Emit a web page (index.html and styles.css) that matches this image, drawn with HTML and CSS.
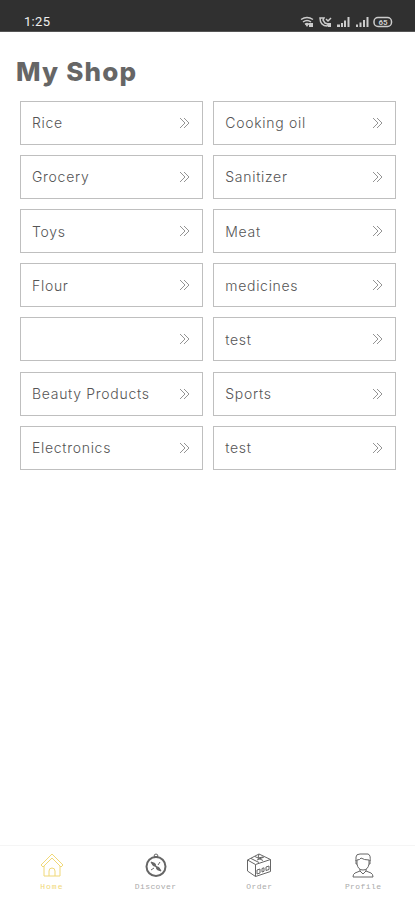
FILE: index.html
```html
<!DOCTYPE html>
<html lang="en">
<head>
<meta charset="utf-8">
<meta name="viewport" content="width=device-width, initial-scale=1">
<title>My Shop</title>
<link rel="stylesheet" href="styles.css">
</head>
<body>
<svg width="0" height="0" class="defs" aria-hidden="true">
  <symbol id="chevrons" viewBox="0 0 11 12"><path d="M1 1l5 5-5 5M5 1l5 5-5 5"/></symbol>
</svg>
<header class="status">
  <span class="time">1:25</span>
  <svg class="indicators" width="94" height="14" viewBox="0 0 94 14">
    <g fill="none" stroke="#ccc" stroke-width="1.5">
      <path d="M1 4.500q6-4 12 0M3 7q4-3 8 0M5 9.300q2-1.500 4 0"/>
      <path d="M20 3c0 5 3 8 7 8l1-2-3-1-2-3 1-2zM26 4l2 2 3-3"/>
      <rect x="74" y="2.500" width="17.500" height="9" rx="4"/>
    </g>
    <g fill="#ccc">
      <path d="M5 9l2 3 2-3zM9 8h4v4H9zM28 8h3v4h-3z"/>
      <path d="M37 9.500h3v2.500h-3zM41 8h2v4h-2zM44 5.500h2V12h-2zM47.500 2h2v10h-2z"/>
      <path d="M56 9.500h2V12h-2zM59.500 7.500h2V12h-2zM63 5h2v7h-2zM66.500 2h2v10h-2z"/>
    </g>
    <text class="battery" x="83" y="10" text-anchor="middle">65</text>
  </svg>
</header>
<main>
  <h1>My Shop</h1>
  <div class="grid">
    <a class="card"><span>Rice</span><svg><use href="#chevrons"/></svg></a>
    <a class="card"><span>Cooking oil</span><svg><use href="#chevrons"/></svg></a>
    <a class="card"><span>Grocery</span><svg><use href="#chevrons"/></svg></a>
    <a class="card"><span>Sanitizer</span><svg><use href="#chevrons"/></svg></a>
    <a class="card"><span>Toys</span><svg><use href="#chevrons"/></svg></a>
    <a class="card"><span>Meat</span><svg><use href="#chevrons"/></svg></a>
    <a class="card"><span>Flour</span><svg><use href="#chevrons"/></svg></a>
    <a class="card"><span>medicines</span><svg><use href="#chevrons"/></svg></a>
    <a class="card"><span></span><svg><use href="#chevrons"/></svg></a>
    <a class="card"><span>test</span><svg><use href="#chevrons"/></svg></a>
    <a class="card"><span>Beauty Products</span><svg><use href="#chevrons"/></svg></a>
    <a class="card"><span>Sports</span><svg><use href="#chevrons"/></svg></a>
    <a class="card"><span>Electronics</span><svg><use href="#chevrons"/></svg></a>
    <a class="card"><span>test</span><svg><use href="#chevrons"/></svg></a>
  </div>
</main>
<nav class="tabs">
  <a class="tab active">
    <svg viewBox="0 0 26 28"><path d="M2 14L13 3l11 11-2 2-9-9-9 9zM5 15v10h16V15M10 25v-5q0-3 3-3t3 3v5"/></svg>
    <span>Home</span>
  </a>
  <a class="tab">
    <svg viewBox="0 0 26 28"><circle class="ring" cx="13" cy="15.500" r="9.500"/><path d="M11 5.500q0-2.500 2-2.500t2 2.500z"/><path class="needle" d="M8 11l4 1.500 1 3-3-1zM18 20l-4-1.500-1-3 3 1zM17 11l-2 3M11 17l-3 2"/></svg>
    <span>Discover</span>
  </a>
  <a class="tab">
    <svg viewBox="0 0 26 28"><path d="M1.500 9v11l8 5.500 15-5V8.500l-15 5zM1.500 9L13 3l11.500 5.500M9.500 13.500v12M5 7.500l8 4M9 5.500l8 4M13 3l-1 4 5-1M11 9l7-3M11 19v4l3-1v-4zM16 17.500v3.500l2-.7v-3.500zM20 16v3.500l3-1V15z"/></svg>
    <span>Order</span>
  </a>
  <a class="tab">
    <svg viewBox="0 0 26 28"><path d="M6 10V6q0-3 4-3h8q3 1 2 7M7 9q3 0 4-2 3 2 8 2v4q-1 6-6 6t-6-6zM6 9v4h1M20 9v4h-1M10 18v2l-5 2q-2 1-2 4h20q0-3-2-4l-5-2v-2M10 20l3 3 3-3"/></svg>
    <span>Profile</span>
  </a>
</nav>
</body>
</html>
```
FILE: styles.css
```css
* { box-sizing: border-box; }

body {
  margin: 0;
  height: 900px;
  display: flex;
  flex-direction: column;
  background: #fff;
  color: #555;
  font-family: Inter, sans-serif;
  overflow: hidden;
}

.defs { display: none; }

.status {
  height: 32px;
  flex: none;
  display: flex;
  justify-content: space-between;
  align-items: flex-start;
  padding: 15px 21px 0 24px;
  background: #303030;
  border-bottom: 1px solid #555;
  color: #eee;
}

.time {
  font: 13px/14px Roboto, sans-serif;
  letter-spacing: 0.3px;
}

.battery {
  font: bold 8px Roboto, sans-serif;
  fill: #ccc;
}

main { flex: 1; }

h1 {
  margin: 24px 0 0 16px;
  font-size: 26px;
  line-height: 32px;
  font-weight: 800;
  letter-spacing: 1.2px;
  color: #666;
}

.grid {
  display: grid;
  grid-template-columns: 1fr 1fr;
  grid-auto-rows: 44px;
  gap: 10.2px 10.6px;
  margin: 12.7px 19px 0 20px;
}

.card {
  display: flex;
  align-items: center;
  justify-content: space-between;
  padding: 0 12px 0 11px;
  border: 1px solid #bfbfbf;
  font-size: 14px;
  font-weight: 300;
  letter-spacing: 0.7px;
}

.card svg {
  width: 11px;
  height: 12px;
  fill: none;
  stroke: #888;
  stroke-width: 0.9;
}

.tabs {
  height: 55px;
  flex: none;
  display: grid;
  grid-template-columns: repeat(4, 1fr);
  border-top: 1px solid #f5f5f5;
}

.tab {
  display: flex;
  flex-direction: column;
  align-items: center;
  padding-top: 5px;
}

.tab svg {
  width: 26px;
  height: 28px;
  fill: none;
  stroke: #666;
  stroke-width: 1;
}

.tab .ring { stroke-width: 2; }
.tab .needle { fill: #666; }

.tab span {
  margin-top: 3px;
  font: 8px/10px "Liberation Mono", monospace;
  letter-spacing: 0.4px;
  color: #aaa;
}

.active svg { stroke: #f0d878; }

.tab.active span {
  color: #f0d878;
  letter-spacing: 1px;
}
```
